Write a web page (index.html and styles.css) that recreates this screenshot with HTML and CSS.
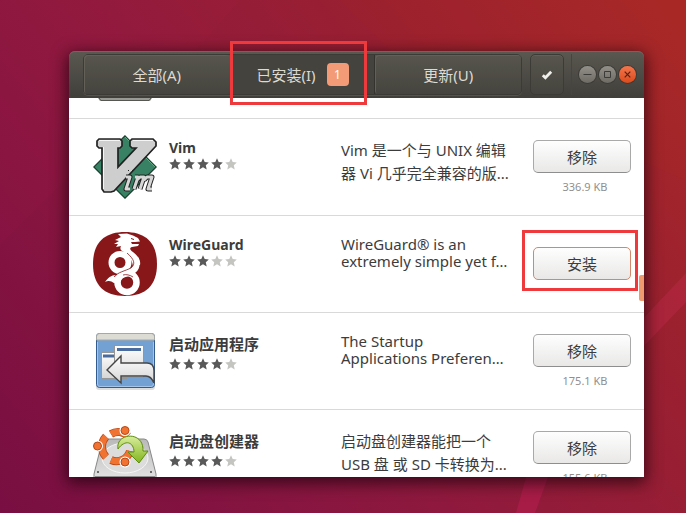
FILE: index.html
```
<!DOCTYPE html>
<html lang="zh-CN">
<head>
    <meta charset="UTF-8">
    <meta name="viewport" content="width=device-width, initial-scale=1.0">
    <title>Ubuntu 软件</title>
    <link rel="stylesheet" href="styles.css">
</head>
<body>
    <!-- 桌面壁纸 -->
    <svg class="wallpaper" viewBox="0 0 686 513" preserveAspectRatio="none" aria-hidden="true">
        <polygon points="0,0 240,0 205,40 0,245" fill="#c0205a" opacity=".06"/>
        <polygon points="340,0 686,0 686,180 400,60" fill="#b03020" opacity=".1"/>
        <polygon points="686,273 686,302 640,350 640,322" fill="#c02a4c" opacity=".4"/>
        <polygon points="527,474 549,474 535,513 516,513" fill="#b51e50" opacity=".6"/>
    </svg>

    <svg class="symbols" aria-hidden="true">
        <symbol id="star" viewBox="0 0 12 12">
            <path d="M6 .2 7.700 4 11.800 4.400 8.800 7.200 9.700 11.400 6 9.300 2.300 11.400 3.200 7.200.2 4.400 4.300 4Z"/>
        </symbol>
    </svg>

    <div class="window">
        <!-- 标题栏 -->
        <header class="header">
            <nav class="tabs">
                <button class="tab" type="button">全部(A)</button>
                <button class="tab active" type="button">已安装(I)<span class="badge">1</span><span class="mark mark-tab"></span></button>
                <button class="tab" type="button">更新(U)</button>
            </nav>
            <button class="check" type="button" aria-label="选择">
                <svg width="12" height="12" viewBox="0 0 12 12"><path d="M1.8 6.2 4.4 8.8 10.2 2.8" fill="none" stroke="#f0efeb" stroke-width="2.8"/></svg>
            </button>
            <div class="controls">
                <button class="control" type="button" aria-label="最小化">
                    <svg width="17" height="17" viewBox="0 0 17 17"><path d="M4.5 8.5h8" stroke="#3c3b37"/></svg>
                </button>
                <button class="control" type="button" aria-label="最大化">
                    <svg width="17" height="17" viewBox="0 0 17 17"><path d="M5.5 5.5h6v6h-6z" fill="none" stroke="#3c3b37"/></svg>
                </button>
                <button class="control close" type="button" aria-label="关闭">
                    <svg width="17" height="17" viewBox="0 0 17 17"><path d="M5.7 5.7 11.3 11.3M11.3 5.7 5.7 11.3" stroke="#4a2418" stroke-width="1.2"/></svg>
                </button>
            </div>
        </header>

        <!-- 软件列表 -->
        <main class="list">
            <div class="app-row partial">
                <svg width="64" height="4" viewBox="0 0 64 4"><path d="M5 0h54l-2 3H7z" fill="#999a96"/><path d="M6 0 8 2.5H56L58 0" fill="none" stroke="#565753"/></svg>
            </div>

            <article class="app-row">
                <svg class="icon" viewBox="0 0 64 64">
                    <path d="M32 .8 63.2 32 32 63.2 .8 32Z" fill="#388164" stroke="#173e2c" stroke-width="1.2"/>
                    <path d="M32 2 62 32" stroke="#62a783" fill="none"/>
                    <path d="M6 4H27l2 2v5l-2 2H25V32L43 13H39l-2-2V6l2-2H60l3 3v4L21 56l-3 1H11l-2-3V13H6l-2-2V6Z" fill="#cecece" stroke="#222" stroke-width="1.700"/>
                    <path d="M6 5.500H27M40 5.500H60M10.500 12V54" stroke="#f5f5f5" fill="none"/>
                    <g fill="none" stroke-linejoin="round">
                        <path d="M37.500 35v1M33 42h4l-4 12h4M42 42h3l-4 12M44 45l3-3h4l-4 12M51 45l3-3h5l-4 12h4" stroke="#222" stroke-width="5"/>
                        <path d="M37.500 35v1M33 42h4l-4 12h4M42 42h3l-4 12M44 45l3-3h4l-4 12M51 45l3-3h5l-4 12h4" stroke="#d6d6d6" stroke-width="3"/>
                    </g>
                </svg>
                <div class="title">
                    <h2 class="name" lang="en">Vim</h2>
                    <div class="stars" role="img" aria-label="4 / 5"><svg><use href="#star"/></svg><svg><use href="#star"/></svg><svg><use href="#star"/></svg><svg><use href="#star"/></svg><svg class="off"><use href="#star"/></svg></div>
                </div>
                <p class="summary">Vim 是一个与 UNIX 编辑<br>器 Vi 几乎完全兼容的版...</p>
                <div class="action">
                    <button class="btn" type="button">移除</button>
                    <span class="size">336.9 KB</span>
                </div>
            </article>

            <article class="app-row">
                <svg class="icon" viewBox="0 0 64 64">
                    <path d="M32 0C53 0 64 11 64 32S53 64 32 64 0 53 0 32 11 0 32 0Z" fill="#88171a"/>
                    <path d="M25 2 34 1.500 40 3.500 45 6 47 9.500 42 10 38 10 39 12 46 12 45 14 39 15C36 16 37 18 40 20 45 24 48 28 47 33L40 34C39 28 36 23 30 19.500 27 18 27 16 28 14L23 15 25 12 21 12 26 9 22 8 28 5Z" fill="#fff"/>
                    <path d="M38 6.500 41 7.500" stroke="#88171a"/>
                    <circle cx="27" cy="30.500" r="8.500" fill="none" stroke="#fff" stroke-width="6"/>
                    <path d="M42 26C45 34 43 38 36 40.500 28 43 24 45 24 51" fill="none" stroke="#fff" stroke-width="6.500"/>
                    <circle cx="34" cy="50.500" r="9.500" fill="none" stroke="#fff" stroke-width="6.500"/>
                    <path d="M23 43C18 43 15 46 12 50 16 48 18 49 21 51Z" fill="#fff"/>
                    <path d="M34 21C41 27 43 32 38 36 32 39 25 40 21 45M30 43C33 42 37 43 40 45" fill="none" stroke="#88171a" stroke-width=".8"/>
                </svg>
                <div class="title">
                    <h2 class="name" lang="en">WireGuard</h2>
                    <div class="stars" role="img" aria-label="3 / 5"><svg><use href="#star"/></svg><svg><use href="#star"/></svg><svg><use href="#star"/></svg><svg class="off"><use href="#star"/></svg><svg class="off"><use href="#star"/></svg></div>
                </div>
                <p class="summary" lang="en">WireGuard® is an<br>extremely simple yet f…</p>
                <div class="action">
                    <button class="btn install" type="button">安装<span class="mark mark-btn"></span></button>
                </div>
            </article>

            <article class="app-row">
                <svg class="icon" viewBox="0 0 64 64">
                    <defs>
                        <linearGradient id="paper" x2="0" y2="1"><stop stop-color="#fff"/><stop offset="1" stop-color="#d5d5d5"/></linearGradient>
                    </defs>
                    <rect x="3" y="6" width="59" height="55" rx="3" fill="#bbb" opacity=".5"/>
                    <rect x="3.500" y="4.500" width="58" height="54" rx="3" fill="#73a1d3" stroke="#335b8e"/>
                    <path d="M3.500 11V7.500q0-3 3-3H58.500q3 0 3 3V11Z" fill="#dcdcd5" stroke="#aaa9a0"/>
                    <path d="M4.500 13V55q0 2.500 2.500 2.500H58q2.500 0 2.500-2.500V13" fill="none" stroke="#a5c5e8"/>
                    <rect x="8.500" y="23.500" width="25" height="26" fill="url(#paper)" stroke="#969696"/>
                    <path d="M10 27h12" stroke="#496b9e" stroke-width="3"/>
                    <rect x="21.500" y="16.500" width="29" height="32" fill="url(#paper)" stroke="#969696"/>
                    <path d="M24 20.500h24" stroke="#496b9e" stroke-width="3"/>
                    <path d="M14 41 28 27V34H54Q61 34 61 42V54Q58 47 53 47H28V54Z" fill="url(#paper)" stroke="#454545" stroke-width="1.400"/>
                </svg>
                <div class="title">
                    <h2 class="name">启动应用程序</h2>
                    <div class="stars" role="img" aria-label="4 / 5"><svg><use href="#star"/></svg><svg><use href="#star"/></svg><svg><use href="#star"/></svg><svg><use href="#star"/></svg><svg class="off"><use href="#star"/></svg></div>
                </div>
                <p class="summary" lang="en">The Startup<br>Applications Preferen…</p>
                <div class="action">
                    <button class="btn" type="button">移除</button>
                    <span class="size">175.1 KB</span>
                </div>
            </article>

            <article class="app-row">
                <svg class="icon" viewBox="0 0 64 64">
                    <defs>
                        <linearGradient id="metal" x2="0" y2="1"><stop stop-color="#b9b9b9"/><stop offset="1" stop-color="#ededed"/></linearGradient>
                        <linearGradient id="leaf" x2="0" y2="1"><stop stop-color="#d8ed9c"/><stop offset="1" stop-color="#82b51c"/></linearGradient>
                    </defs>
                    <path d="M13 13H51q3 0 4 3L63 48V60q0 3-3 3H4q-3 0-3-3V48L9 16q1-3 4-3Z" fill="url(#metal)" stroke="#888"/>
                    <ellipse cx="32" cy="32" rx="23" ry="15" fill="#dcdcdc" stroke="#f6f6f6"/>
                    <path d="M2 50.500H62V61H2Z" fill="#3c3c3c"/>
                    <g fill="#444"><circle cx="5" cy="46" r="1"/><circle cx="58" cy="46" r="1"/></g>
                    <g fill="none" stroke="#b84716" stroke-width="8">
                        <path d="M18 8A14 14 0 0 1 35 10M13 10.500A15 15 0 0 0 13 31M18 34A14 14 0 0 0 37 25"/>
                    </g>
                    <g fill="none" stroke="#f17332" stroke-width="6.500">
                        <path d="M18 8A14 14 0 0 1 35 10M13 10.500A15 15 0 0 0 13 31M18 34A14 14 0 0 0 37 25"/>
                    </g>
                    <g fill="#f17332" stroke="#fff" stroke-width="3"><circle cx="32" cy="4.500" r="4"/><circle cx="4.500" cy="20" r="4"/><circle cx="32" cy="36" r="4"/></g>
                    <g fill="#f17332" stroke="#b84716"><circle cx="32" cy="4.500" r="4"/><circle cx="4.500" cy="20" r="4"/><circle cx="32" cy="36" r="4"/></g>
                    <path d="M25 23C22 7 51 4 50 25H55L46 37 35 26H41C41 16 32 13 25 23Z" fill="url(#leaf)" stroke="#5e8c0e"/>
                </svg>
                <div class="title">
                    <h2 class="name">启动盘创建器</h2>
                    <div class="stars" role="img" aria-label="4 / 5"><svg><use href="#star"/></svg><svg><use href="#star"/></svg><svg><use href="#star"/></svg><svg><use href="#star"/></svg><svg class="off"><use href="#star"/></svg></div>
                </div>
                <p class="summary">启动盘创建器能把一个<br>USB 盘 或 SD 卡转换为...</p>
                <div class="action">
                    <button class="btn" type="button">移除</button>
                    <span class="size">155.6 KB</span>
                </div>
            </article>
            <span class="scrollbar"></span>
        </main>
    </div>
</body>
</html>
```

FILE: styles.css
```
* {
    box-sizing: border-box;
}

body {
    margin: 0;
    padding: 51px 42px 36px 69px;
    height: 100vh;
    display: flex;
    overflow: hidden;
    font-family: "Noto Sans", "Noto Sans CJK SC", sans-serif;
    font-size: 15px;
    color: #3c3c3c;
    background: linear-gradient(52deg, #780e42 0%, #8f193e 42%, #9a2030 72%, #a92828 100%);
}

button {
    font: inherit;
    padding: 0;
    cursor: pointer;
}

.wallpaper {
    position: absolute;
    inset: 0;
    width: 100%;
    height: 100%;
}

.symbols {
    position: absolute;
    width: 0;
    height: 0;
}

.window {
    position: relative;
    flex: 1;
    min-width: 0;
    display: flex;
    flex-direction: column;
    border-radius: 6px 6px 0 0;
    box-shadow: 0 4px 16px 2px rgba(20, 0, 10, .7);
}

/* 标题栏 */
.header {
    position: relative;
    z-index: 1;
    display: flex;
    align-items: center;
    height: 47px;
    padding: 0 8px 0 14px;
    border-radius: 6px 6px 0 0;
    background: linear-gradient(#5a5850, #403f3a);
    box-shadow: inset 0 1px #6a6860;
}

.tabs {
    flex: 1;
    display: flex;
    height: 41px;
    border: 1px solid #3c3b36;
    border-radius: 5px;
    box-shadow: 0 1px #55534b;
}

.tab {
    position: relative;
    flex: 1;
    display: flex;
    align-items: center;
    justify-content: center;
    gap: 11px;
    border: 0;
    border-radius: 4px;
    color: #dcdad2;
    background: linear-gradient(#57554d, #45443e);
    box-shadow: inset 1px 1px #626057;
}

.tab.active {
    border-radius: 0;
    background: #44433d;
    box-shadow: inset 1px 0 #34332e, inset -1px 0 #34332e;
}

.badge {
    width: 22px;
    line-height: 23px;
    border-radius: 4px;
    background: #f29b76;
    color: #fff;
    font-size: 12px;
}

.check {
    display: flex;
    align-items: center;
    justify-content: center;
    width: 34px;
    height: 41px;
    margin: 0 7px 0 8px;
    border: 1px solid #3c3b36;
    border-radius: 5px;
    background: linear-gradient(#57554d, #45443e);
    box-shadow: inset 0 1px #626057;
}

.controls {
    display: flex;
    gap: 3px;
    padding: 12px 0 12px 7px;
    border-left: 1px solid #46453f;
}

.control {
    display: flex;
    width: 17px;
    height: 17px;
    border: 0;
    border-radius: 50%;
    background: linear-gradient(#929089, #6d6b64);
    box-shadow: 0 0 0 1px #3c3b37;
}

.control.close {
    background: linear-gradient(#f4764c, #dc4a1b);
}

/* 软件列表 */
.list {
    position: relative;
    flex: 1;
    min-height: 0;
    overflow: hidden;
    background: #fff;
}

.app-row {
    display: grid;
    grid-template-columns: 64px 8fr 9fr 98px;
    column-gap: 12px;
    height: 97px;
    padding: 0 13px 0 24px;
    border-bottom: 1px solid #d9d9d9;
}

.app-row.partial {
    height: 21px;
}

.icon {
    width: 64px;
    height: 64px;
    margin-top: 16px;
}

.title,
.summary {
    margin: 0;
    padding-top: 20px;
    line-height: 23px;
    white-space: nowrap;
}

.name {
    margin: 0;
    font-size: 15px;
    font-weight: bold;
}

.name:lang(en) {
    font-size: 14px;
    line-height: 17px;
}

.summary:lang(en) {
    line-height: 17px;
}

.stars {
    display: flex;
    gap: 2px;
    padding: 2px 0;
}

.stars svg {
    width: 12px;
    height: 12px;
    fill: #595959;
}

.stars .off {
    fill: #c4c4c0;
}

.action {
    display: flex;
    flex-direction: column;
    gap: 6px;
    padding-top: 21px;
}

.btn {
    position: relative;
    height: 33px;
    border: 1px solid #a9a9a9;
    border-bottom-color: #8e8e8e;
    border-radius: 5px;
    background: linear-gradient(#fefefe, #e9e8e7);
    color: #3c3c3c;
}

.btn.install {
    margin-top: 10px;
    border-color: #d0896c;
}

.size {
    padding-left: 6px;
    text-align: center;
    font-size: 11px;
    line-height: 16px;
    color: #8f8f8f;
}

.scrollbar {
    position: absolute;
    top: 177px;
    right: 0;
    width: 5px;
    height: 26px;
    border-radius: 2px 0 0 2px;
    background: #f09a70;
}

/* 红色标注框 */
.mark {
    position: absolute;
    border: 3px solid #ee3a3c;
    pointer-events: none;
}

.mark-tab {
    inset: -14px 8px -11px 0;
}

.mark-btn {
    inset: -18px -8px -12px -12px;
}
```
